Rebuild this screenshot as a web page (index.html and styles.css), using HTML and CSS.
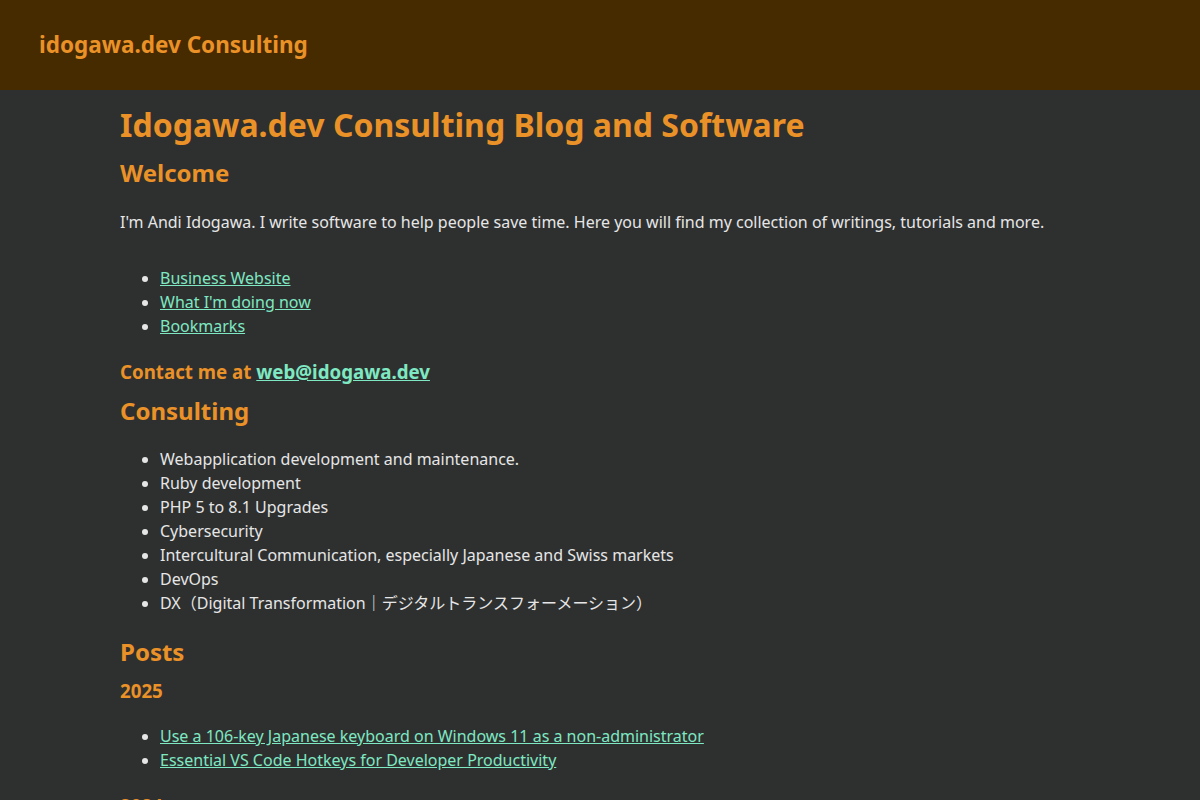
FILE: index.html
```html
<!DOCTYPE html>
<html lang="en">
<head>
<meta charset="utf-8">
<title>Idogawa.dev Consulting Blog and Software</title>
<link rel="stylesheet" href="styles.css">
</head>
<body>
<header class="site-header">
  <a class="brand" href="#">idogawa.dev Consulting</a>
</header>
<main class="content">
  <h1>Idogawa.dev Consulting Blog and Software</h1>
  <h2 class="welcome">Welcome</h2>
  <p class="intro">I'm Andi Idogawa. I write software to help people save time. Here you will find my collection of writings, tutorials and more.</p>
  <ul>
    <li><a href="#">Business Website</a></li>
    <li><a href="#">What I'm doing now</a></li>
    <li><a href="#">Bookmarks</a></li>
  </ul>
  <h3>Contact me at <a href="#">web@idogawa.dev</a></h3>
  <h2>Consulting</h2>
  <ul class="services">
    <li>Webapplication development and maintenance.</li>
    <li>Ruby development</li>
    <li>PHP 5 to 8.1 Upgrades</li>
    <li>Cybersecurity</li>
    <li>Intercultural Communication, especially Japanese and Swiss markets</li>
    <li>DevOps</li>
    <li>DX（Digital Transformation｜デジタルトランスフォーメーション）</li>
  </ul>
  <h2>Posts</h2>
  <h3>2025</h3>
  <ul class="posts">
    <li><a href="#">Use a 106-key Japanese keyboard on Windows 11 as a non-administrator</a></li>
    <li><a href="#">Essential VS Code Hotkeys for Developer Productivity</a></li>
  </ul>
  <h3>2024</h3>
  <ul class="posts">
    <li><a href="#">More posts</a></li>
  </ul>
</main>
</body>
</html>
```

FILE: styles.css
```css
html, body {
  margin: 0;
  padding: 0;
}
body {
  background: #2e3030;
  color: #e6e6e6;
  font-family: "Noto Sans", "Noto Sans CJK JP", sans-serif;
  font-size: 16px;
  line-height: 1.5;
}
.site-header {
  background: #462a00;
  height: 90px;
  display: flex;
  align-items: center;
  padding: 0 39px;
  box-sizing: border-box;
}
.brand {
  color: #ea9127;
  font-weight: 700;
  font-size: 22.5px;
  text-decoration: none;
}
.content {
  max-width: 960px;
  margin: 0 auto;
  padding-top: 11px;
}
h1, h2, h3 {
  color: #ea9127;
  font-weight: 700;
  margin: 7px 0;
}
h1 {
  font-size: 32px;
  margin: 0 0 6px;
}
h2 {
  font-size: 24px;
}
.welcome {
  margin-top: 6px;
}
h3 {
  font-size: 18.72px;
}
p {
  margin: 19px 0;
}
.intro {
  margin-bottom: 32px;
}
ul {
  margin: 18px 0 20px;
  padding-left: 40px;
}
.services {
  margin-bottom: 19px;
}
.posts {
  margin-top: 19px;
}
a {
  color: #7ee8c2;
}
```
